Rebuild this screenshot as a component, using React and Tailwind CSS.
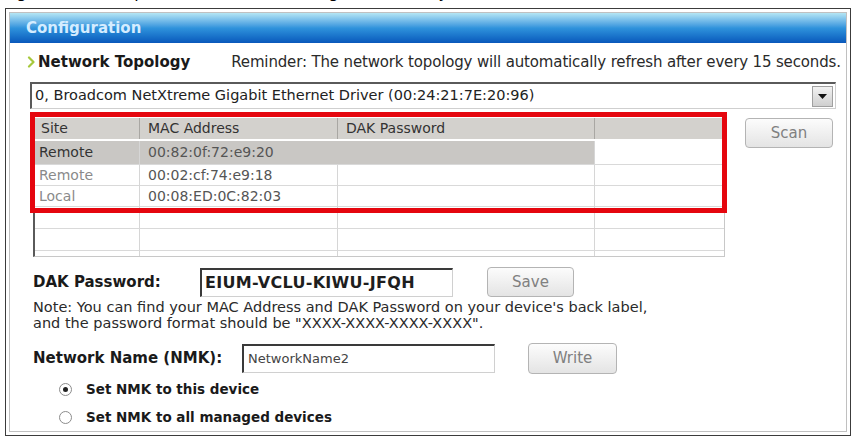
import React from "react";

const F = "font-['DejaVu_Sans',Verdana,sans-serif]";

function Radio({ checked, label }) {
  return (
    <div className="flex h-[20px] items-center">
      <div className="ml-[32px] flex h-[13px] w-[13px] items-center justify-center rounded-full border border-[#8c8c8c] bg-white">
        {checked && <div className="h-[5px] w-[5px] rounded-full bg-[#222]" />}
      </div>
      <span className="ml-[14px] text-[13.5px] font-bold text-[#1a1a1a]">{label}</span>
    </div>
  );
}

function Btn({ children, w, h }) {
  return (
    <div
      className={`flex items-center justify-center rounded-[4px] border border-[#b4b4b4] bg-gradient-to-b from-[#fcfcfc] to-[#e4e4e4] text-[15px] text-[#808080] ${w} ${h}`}
    >
      {children}
    </div>
  );
}

const rows = [
  { site: "Remote", mac: "00:82:0f:72:e9:20", sel: true, h: "h-[24px]" },
  { site: "Remote", mac: "00:02:cf:74:e9:18", h: "h-[21px]" },
  { site: "Local", mac: "00:08:ED:0C:82:03", h: "h-[21px]" },
  { site: "", mac: "", h: "h-[22px]" },
  { site: "", mac: "", h: "h-[22px]" },
  { site: "", mac: "", h: "h-[22px]" },
];

export default function App() {
  return (
    <div className={`relative h-[437px] w-[856px] overflow-hidden bg-white ${F}`}>
      {/* clipped caption */}
      <div className="h-[8px] overflow-hidden">
        <div className="-mt-[17px] pl-[4px] text-[16px] leading-[20px] text-black">
          Figure 2-4 Example of the Network Configuration Utility
        </div>
      </div>

      {/* frame */}
      <div className="mx-[5px] h-[428px] border border-[#3c3c3c] p-[3px]">
        <div className="h-full border border-[#c0c0c0]">
          {/* header */}
          <div className="flex h-[30px] items-center bg-gradient-to-b from-[#b4e6f4] via-[#2f93dc] to-[#0a58bb] pl-[16px]">
            <span className="text-[15px] font-bold text-[#d4ecff]">Configuration</span>
          </div>

          <div className="pl-[17px] text-[#222]">
            {/* topology row */}
            <div className="mt-[9px] flex h-[20px] items-center">
              <svg width="11" height="12" viewBox="0 0 11 12" className="shrink-0">
                <path d="M2 1.5L6.5 6L2 10.5" fill="none" stroke="#a6c83c" strokeWidth="2.2" strokeLinecap="round" strokeLinejoin="round" />
              </svg>
              <span className="text-[15px] font-bold text-[#1a1a1a]">Network Topology</span>
              <span className="ml-[41px] text-[15px] tracking-[-0.15px] text-[#2a2a2a]">
                Reminder: The network topology will automatically refresh after every 15 seconds.
              </span>
            </div>

            {/* select */}
            <div className="ml-[3px] mt-[10px] flex h-[27px] w-[806px] items-center border-l-2 border-t-2 border-[#5a5a5a] border-b border-r border-b-[#cfcfcf] border-r-[#cfcfcf] bg-white pl-[3px]">
              <span className="flex-1 text-[14.5px] text-[#222]">
                0, Broadcom NetXtreme Gigabit Ethernet Driver (00:24:21:7E:20:96)
              </span>
              <div className="mr-[2px] flex h-[21px] w-[21px] items-center justify-center border border-[#a0a0a0] bg-gradient-to-b from-[#f2f2f2] to-[#cfcfcf]">
                <svg width="9" height="5" viewBox="0 0 9 5">
                  <path d="M0 0h9L4.5 5z" fill="#111" />
                </svg>
              </div>
            </div>

            {/* table + scan */}
            <div className="mt-[9px] flex items-start">
              <div className="relative ml-[6px] h-[139px] w-[692px] border-l-2 border-[#5a5a5a] border-b border-r border-b-[#c8c8c8] border-r-[#c8c8c8] text-[14px]">
                <div className="h-full overflow-hidden">
                  <div className="grid h-[23px] grid-cols-[105px_198px_257px_1fr] border-b-2 border-white bg-[#d3d1cd] text-[#333]">
                    <div className="flex items-center border-r border-[#a9a7a3] pl-[6px]">Site</div>
                    <div className="flex items-center border-r border-[#a9a7a3] pl-[8px]">MAC Address</div>
                    <div className="flex items-center border-r border-[#a9a7a3] pl-[8px]">DAK Password</div>
                    <div />
                  </div>
                  {rows.map((r, i) => (
                    <div
                      key={i}
                      className={`grid grid-cols-[105px_198px_257px_1fr] border-b border-[#d9d9d9] ${r.h}`}
                    >
                      <div
                        className={`flex items-center border-r border-[#d6d6d6] pl-[4px] ${
                          r.sel ? "bg-[#c9c7c4] text-[#333]" : "text-[#8a8a8a]"
                        }`}
                      >
                        {r.site}
                      </div>
                      <div
                        className={`flex items-center pl-[8px] text-[#555] ${
                          r.sel ? "bg-[#c9c7c4]" : "border-r border-[#d6d6d6]"
                        }`}
                      >
                        {r.mac}
                      </div>
                      <div className={`border-r border-[#d6d6d6] ${r.sel ? "bg-[#c9c7c4]" : ""}`} />
                      <div />
                    </div>
                  ))}
                </div>
                {/* red annotation */}
                <div className="pointer-events-none absolute left-[-5px] top-[-6px] h-[101px] w-[697px] border-[5px] border-[#e5060e]" />
              </div>
              <div className="ml-[20px]">
                <Btn w="w-[88px]" h="h-[30px]">Scan</Btn>
              </div>
            </div>

            {/* DAK password */}
            <div className="ml-[6px] mt-[10px] flex items-center">
              <span className="w-[167px] text-[15px] font-bold text-[#1a1a1a]">DAK Password:</span>
              <div className="flex h-[29px] w-[253px] items-center border-l-2 border-t-2 border-[#3a3a3a] border-b border-r border-b-[#d0d0d0] border-r-[#d0d0d0] pl-[3px] text-[16px] font-bold tracking-[0.3px] text-[#1e1e1e]">
                EIUM-VCLU-KIWU-JFQH
              </div>
              <div className="ml-[34px]">
                <Btn w="w-[87px]" h="h-[30px]">Save</Btn>
              </div>
            </div>

            {/* note */}
            <div className="ml-[6px] mt-[3px] text-[14.5px] leading-[15.5px] text-[#2a2a2a]">
              <div>Note: You can find your MAC Address and DAK Password on your device's back label,</div>
              <div>and the password format should be "XXXX-XXXX-XXXX-XXXX".</div>
            </div>

            {/* NMK */}
            <div className="ml-[6px] mt-[12px] flex items-center">
              <span className="w-[209px] text-[15px] font-bold text-[#1a1a1a]">Network Name (NMK):</span>
              <div className="flex h-[29px] w-[253px] items-center border-l-2 border-t-2 border-[#3a3a3a] border-b border-r border-b-[#d0d0d0] border-r-[#d0d0d0] pl-[4px] text-[13px] text-[#444]">
                NetworkName2
              </div>
              <div className="ml-[33px]">
                <Btn w="w-[89px]" h="h-[31px]">Write</Btn>
              </div>
            </div>

            <div className="mt-[5px]">
              <Radio checked label="Set NMK to this device" />
            </div>
            <div className="mt-[8px]">
              <Radio label="Set NMK to all managed devices" />
            </div>
          </div>
        </div>
      </div>
    </div>
  );
}
